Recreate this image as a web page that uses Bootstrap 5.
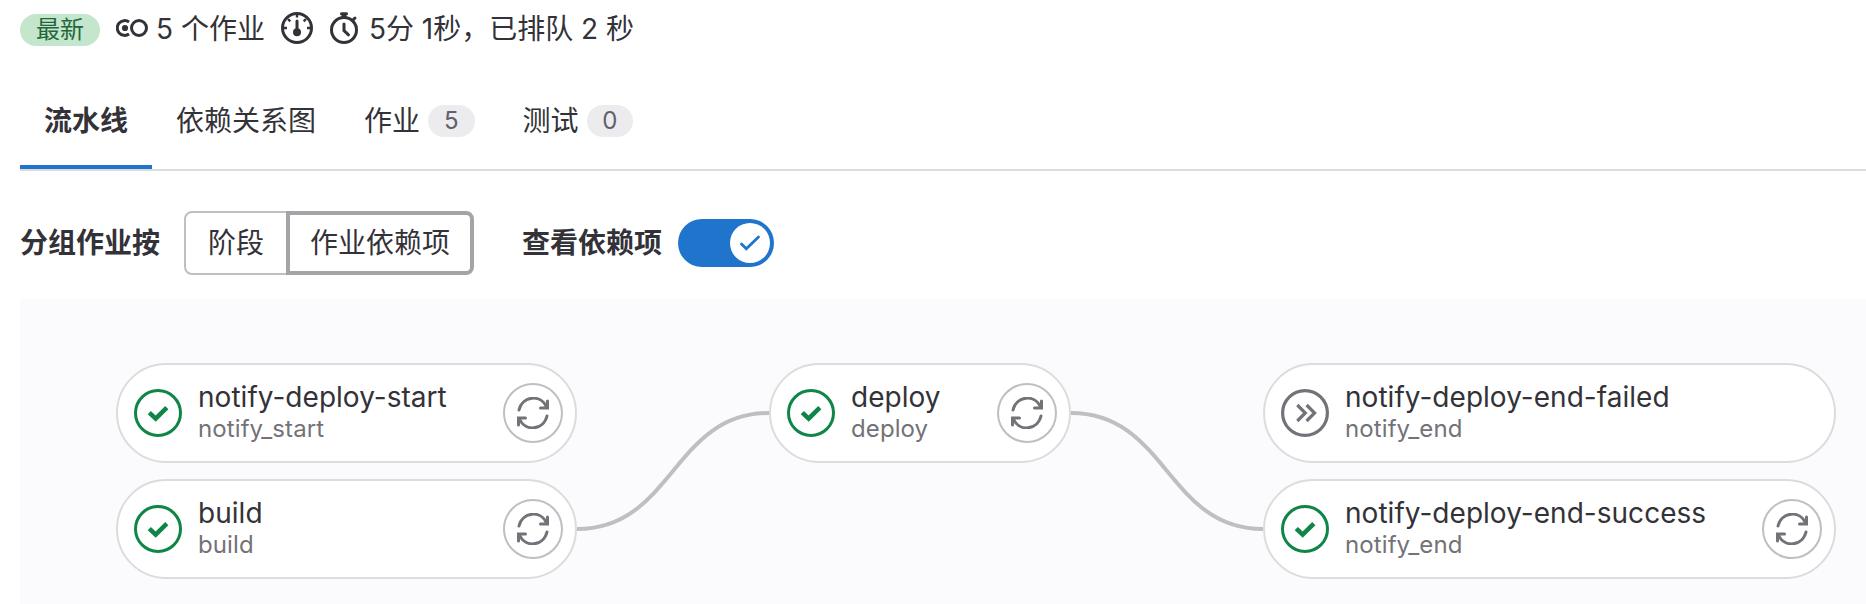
<!DOCTYPE html>
<html lang="zh-CN">
<head>
<meta charset="utf-8">
<meta name="viewport" content="width=device-width, initial-scale=1">
<title>流水线</title>
<link href="https://cdn.jsdelivr.net/npm/bootstrap@5.3.0/dist/css/bootstrap.min.css" rel="stylesheet">
<style>
  body { font-family: Inter, "Noto Sans CJK SC", sans-serif; font-size: 28px; line-height: 40px; color: #333238; overflow: hidden; background: #fff; }
  svg { flex: none; display: block; }
  .page { padding: 8px 0 0 20px; height: 604px; }
  .summary { height: 40px; line-height: 42px; white-space: nowrap; }
  .summary svg { margin-top: 4px; }
  .tag-latest { width: 80px; height: 32px; margin: 6px 16px 0 0; font-size: 24px; line-height: 32px; background: #c3e6cd; color: #24663b; }
  .jobs-total { margin: 0 16px 0 8px; }
  .elapsed { margin-left: 8px; }
  .timer { margin-left: 16px; }
  .pipe-tabs { height: 99px; margin-top: 24px; border-bottom: 2px solid #dcdcde; --bs-nav-link-color: #333238; --bs-nav-link-hover-color: #333238; }
  .pipe-tabs .nav-link { padding: 4px 24px 0; height: 97px; border-bottom: 4px solid transparent; }
  .pipe-tabs .nav-link.active { border-color: #1f75cb; font-weight: 600; }
  .count { width: 46.5px; height: 32px; margin-left: 8px; font-size: 24px; line-height: 32px; background: #ececef; color: #626168; text-align: center; }
  .toolbar { height: 64px; margin-top: 40px; }
  .toolbar b { font-weight: 600; }
  .view-by { margin: 0 48px 0 24px; }
  .seg { --bs-btn-font-size: 28px; --bs-btn-line-height: 40px; --bs-btn-padding-x: 22px; --bs-btn-padding-y: 10px; --bs-btn-border-width: 2px; --bs-btn-border-radius: 8px; --bs-btn-border-color: #bfbfc3; --bs-btn-color: #333238; --bs-btn-bg: #fff; --bs-btn-active-bg: #fff; --bs-btn-active-color: #333238; --bs-btn-active-border-color: #a4a3a8; height: 64px; }
  .btn-group > .seg:not(:first-child) { margin-left: -2px !important; }
  .seg.active { --bs-btn-border-width: 4px; --bs-btn-padding-x: 20px; --bs-btn-padding-y: 8px; }
  .switch { width: 96px; height: 48px; margin-left: 16px; padding: 4px; background: #1f75cb; border: 0; }
  .knob { width: 40px; height: 40px; }
  .graph { margin-top: 24px; padding: 64px 0 0 96px; height: 305px; background: #fbfafd; }
  .stage { gap: 16px; flex: none; }
  .job { height: 100px; border: 2px solid #dcdcde; border-radius: 50px; padding: 0 12px 0 16px; background: #fff; }
  .job-text { margin-left: 16px; white-space: nowrap; }
  .job-name { font-size: 28px; line-height: 30px; padding-bottom: 2px; letter-spacing: .03px; }
  .job-stage { font-size: 24px; line-height: 30px; color: #737278; letter-spacing: .1px; }
  .retry { width: 60px; height: 60px; border: 2px solid #bfbfc3; background: #fff; padding: 0; }
</style>
</head>
<body>
<svg width="0" height="0" class="position-absolute">
  <symbol id="ok" viewBox="0 0 48 48"><circle cx="24" cy="24" r="22.5" fill="#fff" stroke="#108548" stroke-width="3"/><path d="M15.3 23.6 21.7 29.6 32.8 18.6" fill="none" stroke="#108548" stroke-width="4.6"/></symbol>
  <symbol id="skip" viewBox="0 0 48 48"><g fill="none" stroke="#737278"><circle cx="24" cy="24" r="22.4" stroke-width="3.2"/><path d="M16.3 16 24.3 24l-8 8M25.6 16l8 8-8 8" stroke-width="3.2"/></g></symbol>
  <symbol id="redo" viewBox="0 0 32 32"><g fill="none" stroke="#737278" stroke-width="3" stroke-linecap="round"><path d="M2 13C5.500-1.500 24-3 29.500 10M30 19C26.500 33.500 8 35 2.500 22"/><path d="M30.500 4V11H23.500M1.500 28V21H8.500"/></g></symbol>
</svg>
<main class="page">
  <div class="summary d-flex">
    <span class="tag-latest rounded-pill text-center d-block">最新</span>
    <svg width="32" height="32" viewBox="0 0 32 32"><g fill="none" stroke="#333238" stroke-width="3"><circle cx="23" cy="16" r="7.5"/><path d="M13 10A7.400 7.400 0 1 0 13 22"/></g><circle cx="9" cy="16" r="3.100" fill="#333238"/></svg>
    <span class="jobs-total">5 个作业</span>
    <svg class="gauge" width="32" height="32" viewBox="0 0 32 32"><g fill="none" stroke="#333238" stroke-width="3"><circle cx="16" cy="16" r="14.500"/><path d="M16 9v11" stroke-linecap="round"/><path d="M2 16h4M26 16h4M16 2v3.500M7 7l2.300 2.300M25 7 22.700 9.300" stroke-width="2.400"/></g><circle cx="16" cy="20.300" r="4" fill="#333238"/></svg>
    <svg class="timer" width="32" height="32" viewBox="0 0 32 32"><g fill="none" stroke="#333238" stroke-width="3"><circle cx="15" cy="18" r="12.500"/><path d="M15 12v6.500l4.500 4.300" stroke-linecap="round"/><path d="M23.500 8.500 26 6" stroke-linecap="round"/><path d="M15 2v4" stroke-width="5"/><path d="M12.500 1.700h5" stroke-linecap="round"/></g></svg>
    <span class="elapsed">5分 1秒，已排队 2 秒</span>
  </div>
  <ul class="nav pipe-tabs">
    <li class="nav-item"><a class="nav-link active d-flex align-items-center" href="#">流水线</a></li>
    <li class="nav-item"><a class="nav-link d-flex align-items-center" href="#">依赖关系图</a></li>
    <li class="nav-item"><a class="nav-link d-flex align-items-center" href="#">作业<span class="count rounded-pill">5</span></a></li>
    <li class="nav-item"><a class="nav-link d-flex align-items-center" href="#">测试<span class="count rounded-pill">0</span></a></li>
  </ul>
  <div class="toolbar d-flex align-items-center">
    <b>分组作业按</b>
    <div class="btn-group view-by">
      <button class="btn seg" type="button">阶段</button>
      <button class="btn seg active" type="button">作业依赖项</button>
    </div>
    <b>查看依赖项</b>
    <button class="switch rounded-pill d-flex justify-content-end" type="button" aria-label="查看依赖项">
      <span class="knob rounded-circle bg-white d-flex align-items-center justify-content-center"><svg width="24" height="24" viewBox="0 0 24 24"><path d="M3.500 13 8.300 17.800 20.500 6" fill="none" stroke="#1f75cb" stroke-width="2.800" stroke-linecap="round"/></svg></span>
    </button>
  </div>
  <section class="graph d-flex align-items-start">
    <div class="stage d-flex flex-column" style="width:461px">
      <div class="job d-flex align-items-center"><svg width="48" height="48"><use href="#ok"/></svg><div class="job-text"><div class="job-name">notify-deploy-start</div><div class="job-stage">notify_start</div></div><button class="retry rounded-circle ms-auto d-flex align-items-center justify-content-center"><svg width="32" height="32"><use href="#redo"/></svg></button></div>
      <div class="job d-flex align-items-center"><svg width="48" height="48"><use href="#ok"/></svg><div class="job-text"><div class="job-name">build</div><div class="job-stage">build</div></div><button class="retry rounded-circle ms-auto d-flex align-items-center justify-content-center"><svg width="32" height="32"><use href="#redo"/></svg></button></div>
    </div>
    <svg width="192" height="216"><path d="M0 166C96 166 96 50 192 50" fill="none" stroke="#bfbfc3" stroke-width="4"/></svg>
    <div class="stage d-flex flex-column" style="width:302px">
      <div class="job d-flex align-items-center"><svg width="48" height="48"><use href="#ok"/></svg><div class="job-text"><div class="job-name">deploy</div><div class="job-stage">deploy</div></div><button class="retry rounded-circle ms-auto d-flex align-items-center justify-content-center"><svg width="32" height="32"><use href="#redo"/></svg></button></div>
    </div>
    <svg width="192" height="216"><path d="M0 50C96 50 96 166 192 166" fill="none" stroke="#bfbfc3" stroke-width="4"/></svg>
    <div class="stage d-flex flex-column" style="width:573px">
      <div class="job d-flex align-items-center"><svg width="48" height="48"><use href="#skip"/></svg><div class="job-text"><div class="job-name">notify-deploy-end-failed</div><div class="job-stage">notify_end</div></div></div>
      <div class="job d-flex align-items-center"><svg width="48" height="48"><use href="#ok"/></svg><div class="job-text"><div class="job-name">notify-deploy-end-success</div><div class="job-stage">notify_end</div></div><button class="retry rounded-circle ms-auto d-flex align-items-center justify-content-center"><svg width="32" height="32"><use href="#redo"/></svg></button></div>
    </div>
  </section>
</main>
<script src="https://cdn.jsdelivr.net/npm/bootstrap@5.3.0/dist/js/bootstrap.bundle.min.js"></script>
</body>
</html>
